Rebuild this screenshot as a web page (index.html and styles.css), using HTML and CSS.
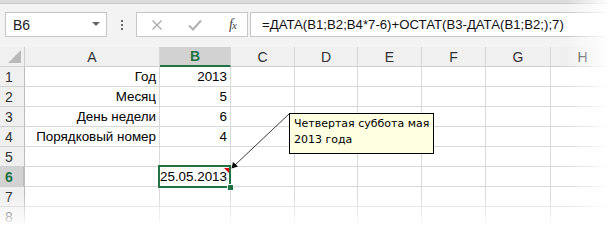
FILE: index.html
```html
<!DOCTYPE html>
<html lang="ru">
<head>
<meta charset="utf-8">
<title>Excel</title>
<link rel="stylesheet" href="styles.css">
</head>
<body>
<div class="app">
  <div class="topstrip"></div>
  <div class="toolbar">
    <div class="namebox"><span class="nb-text">B6</span><span class="nb-arrow"></span></div>
    <div class="dots"><i></i><i></i><i></i></div>
    <div class="iconbox">
      <svg class="ico" width="12" height="12" viewBox="0 0 12 12"><path d="M1.5 1.5 L10.5 10.5 M10.5 1.5 L1.5 10.5" stroke="#a8a8a8" stroke-width="1.3" fill="none"/></svg>
      <svg class="ico" width="14" height="12" viewBox="0 0 14 12"><path d="M1 6.5 L5 10.5 L13 1.5" stroke="#b0b0b0" stroke-width="2" fill="none"/></svg>
      <span class="fx"><i>f</i><i class="x">x</i></span>
    </div>
    <div class="formula">=ДАТА(B1;B2;B4*7-6)+ОСТАТ(B3-ДАТА(B1;B2;);7)</div>
  </div>
  <div class="sheet">
    <div class="hd corner"><span class="tri"></span></div>
    <div class="hd col">A</div>
    <div class="hd col sel-col">B</div>
    <div class="hd col">C</div>
    <div class="hd col">D</div>
    <div class="hd col">E</div>
    <div class="hd col">F</div>
    <div class="hd col">G</div>
    <div class="hd col">H</div>

    <div class="hd row">1</div>
    <div class="c">Год</div><div class="c">2013</div><div class="c"></div><div class="c"></div><div class="c"></div><div class="c"></div><div class="c"></div><div class="c"></div>

    <div class="hd row">2</div>
    <div class="c">Месяц</div><div class="c">5</div><div class="c"></div><div class="c"></div><div class="c"></div><div class="c"></div><div class="c"></div><div class="c"></div>

    <div class="hd row">3</div>
    <div class="c">День недели</div><div class="c">6</div><div class="c"></div><div class="c"></div><div class="c"></div><div class="c"></div><div class="c"></div><div class="c"></div>

    <div class="hd row">4</div>
    <div class="c">Порядковый номер</div><div class="c">4</div><div class="c"></div><div class="c"></div><div class="c"></div><div class="c"></div><div class="c"></div><div class="c"></div>

    <div class="hd row">5</div>
    <div class="c"></div><div class="c"></div><div class="c"></div><div class="c"></div><div class="c"></div><div class="c"></div><div class="c"></div><div class="c"></div>

    <div class="hd row sel-row">6</div>
    <div class="c"></div><div class="c active"><span class="redtri"></span>25.05.2013<span class="selbox"></span><span class="handle"></span></div><div class="c"></div><div class="c"></div><div class="c"></div><div class="c"></div><div class="c"></div><div class="c"></div>

    <div class="hd row">7</div>
    <div class="c"></div><div class="c"></div><div class="c"></div><div class="c"></div><div class="c"></div><div class="c"></div><div class="c"></div><div class="c"></div>

    <div class="hd row">8</div>
    <div class="c"></div><div class="c"></div><div class="c"></div><div class="c"></div><div class="c"></div><div class="c"></div><div class="c"></div><div class="c"></div>
  </div>

  <svg class="arrow" width="608" height="224" viewBox="0 0 608 224">
    <line x1="289.5" y1="113.5" x2="235" y2="165" stroke="#3a3a3a" stroke-width="1"/>
    <polygon points="231.5,168.5 233,162 238,166.5" fill="#000"/>
  </svg>
  <div class="comment">Четвертая суббота мая<br>2013 года</div>
  <div class="fade"></div>
</div>
</body>
</html>
```

FILE: styles.css
```css
* { box-sizing: border-box; }
html, body { margin: 0; padding: 0; background: #fff; }
.app {
  position: relative;
  width: 608px;
  height: 224px;
  overflow: hidden;
  font-family: "Liberation Sans", Arial, sans-serif;
}
.topstrip {
  height: 4px;
  background: #dcdcdc;
  border-bottom: 1px solid #c9c9c9;
}
.toolbar {
  height: 43px;
  background: #f3f3f3;
  display: flex;
  align-items: flex-start;
  padding-top: 8px;
  padding-left: 5px;
}
.namebox {
  width: 102px;
  height: 25px;
  background: #fff;
  border: 1px solid #c6c6c6;
  display: flex;
  align-items: center;
  justify-content: space-between;
  padding: 0 6px 0 7px;
  font-size: 14px;
  color: #222;
}
.nb-arrow {
  width: 0; height: 0;
  border-left: 4px solid transparent;
  border-right: 4px solid transparent;
  border-top: 4px solid #666;
  margin-top: -2px;
}
.dots {
  width: 29px;
  height: 25px;
  display: flex;
  flex-direction: column;
  align-items: center;
  justify-content: center;
  gap: 2px;
}
.dots i {
  display: block;
  width: 2px; height: 2px;
  background: #6a6a6a;
}
.iconbox {
  width: 112px;
  height: 25px;
  background: #fff;
  border: 1px solid #c6c6c6;
  display: flex;
  align-items: center;
  padding-left: 14px;
  gap: 0;
}
.iconbox .ico:first-child { margin-right: 25px; }
.iconbox .ico:nth-child(2) { margin-right: 27px; }
.fx {
  font-family: "Liberation Serif", "Times New Roman", serif;
  font-size: 14px;
  color: #444;
  letter-spacing: -1px;
}
.fx .x { font-size: 11px; }
.formula {
  flex: 1;
  height: 25px;
  margin-left: 2px;
  background: #fff;
  border: 1px solid #c6c6c6;
  border-right: none;
  padding-left: 11px;
  font-size: 13.2px;
  line-height: 23px;
  color: #111;
  white-space: nowrap;
}
.sheet {
  display: grid;
  grid-template-columns: 25px 135px 71px 64px 63px 64px 64px 65px 64px;
  grid-auto-rows: 20px;
}
.hd {
  background: #f0f0f0;
  border-right: 1px solid #cfcfcf;
  border-bottom: 1px solid #cfcfcf;
  color: #333;
  font-size: 14px;
  display: flex;
  align-items: center;
  justify-content: center;
}
.hd.col { border-right-color: #d6d6d6; }
.hd.row { justify-content: flex-start; padding-left: 5px; border-right-color: #bdbdbd; }
.corner { position: relative; }
.tri {
  position: absolute;
  right: 3px; bottom: 3px;
  width: 0; height: 0;
  border-left: 13px solid transparent;
  border-bottom: 13px solid #b9b9b9;
}
.sel-col {
  background: #d2d2d2;
  color: #217346;
  font-weight: bold;
  border-bottom: 2px solid #217346;
}
.sel-row {
  background: #d2d2d2;
  color: #217346;
  font-weight: bold;
  border-right: 2px solid #217346;
}
.c {
  border-right: 1px solid #d9d9d9;
  border-bottom: 1px solid #d9d9d9;
  font-size: 13.4px;
  color: #000;
  text-align: right;
  padding-right: 3px;
  line-height: 19px;
  white-space: nowrap;
}
.c.active { padding-right: 4px; }
.active { position: relative; }
.selbox {
  position: absolute;
  left: -2px; top: -2px;
  right: -1px; bottom: -2px;
  border: 2px solid #217346;
}
.handle {
  position: absolute;
  right: -4px; bottom: -5px;
  width: 7px; height: 7px;
  background: #217346;
  border: 1px solid #fff;
}
.redtri {
  position: absolute;
  right: 1px; top: 1px;
  width: 0; height: 0;
  border-left: 5px solid transparent;
  border-top: 5px solid #e00000;
}
.arrow {
  position: absolute;
  left: 0; top: 0;
  pointer-events: none;
}
.comment {
  position: absolute;
  left: 289px;
  top: 113px;
  width: 145px;
  height: 41px;
  background: #ffffe1;
  border: 1px solid #000;
  font-family: "DejaVu Sans", Tahoma, sans-serif;
  font-size: 11px;
  line-height: 16px;
  padding: 2px 0 0 4px;
  color: #000;
}
.fade {
  position: absolute;
  left: 0; top: 0; right: 0; bottom: 0;
  pointer-events: none;
  background:
    linear-gradient(to right, rgba(255,255,255,0) 565px, rgba(255,255,255,0.95) 608px),
    linear-gradient(to bottom, rgba(255,255,255,0) 196px, rgba(255,255,255,0.9) 224px);
}
```
